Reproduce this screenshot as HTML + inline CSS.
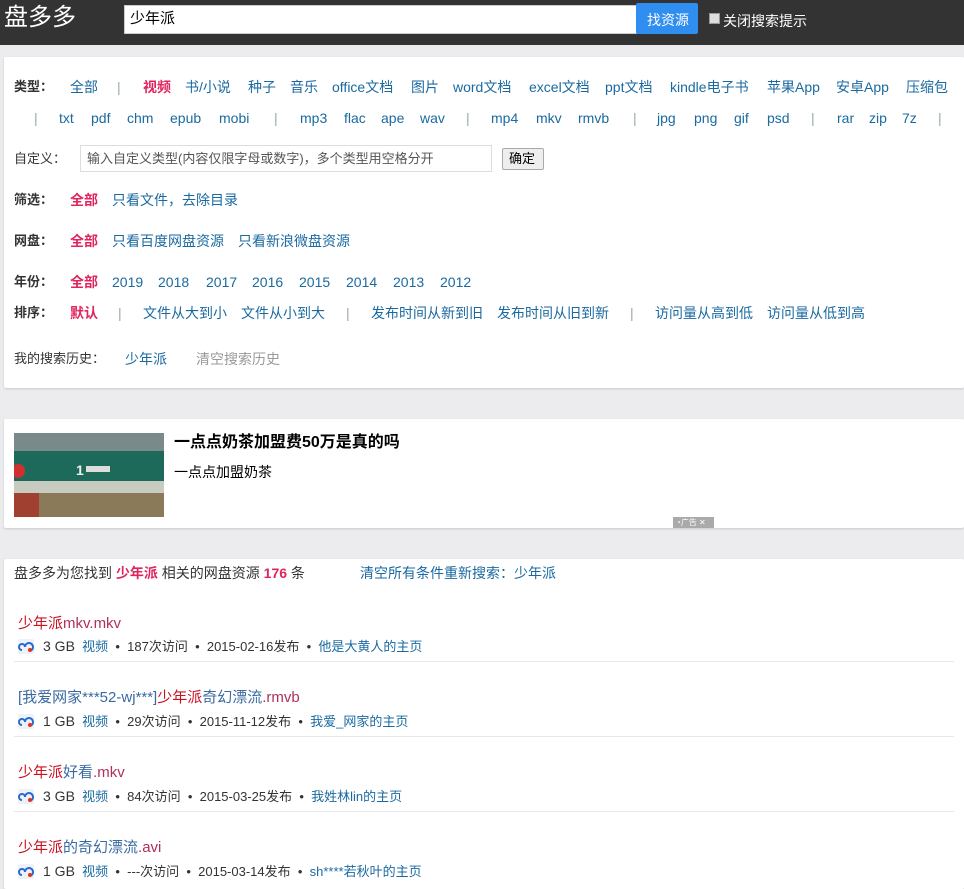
<!DOCTYPE html>
<html><head><meta charset="utf-8"><style>
*{margin:0;padding:0;box-sizing:border-box}
body{width:964px;height:884px;background:#ececee;font-family:"Liberation Sans","Noto Sans CJK SC",sans-serif;font-size:14px;color:#333;position:relative;overflow:hidden}
.a{position:absolute;white-space:nowrap;line-height:20px}
.l{color:#1a6aa0}
.r{color:#e0245e}
.b{font-weight:bold}
.s{color:#9aa;}
.p{position:absolute;left:4px;right:0;background:#fff;box-shadow:0 1px 2px rgba(0,0,0,.15);border-radius:2px}
.t{font-size:15px}
.k{color:#cc1020}
.m{font-size:13px;color:#333}
.hr{position:absolute;left:14px;width:940px;height:1px;background:#e8e8e8}
.ic{position:absolute;width:16px;height:15px;background:#eef2f6;border-radius:2px}
</style></head><body>
<div style="position:absolute;left:0;top:0;width:964px;height:45px;background:#333"></div>
<div class="a" style="left:4px;top:3px;font-size:24px;line-height:30px;color:#fff">盘多多</div>
<div style="position:absolute;left:124px;top:5px;width:513px;height:29px;background:#fff;border:1px solid #ccc"></div>
<div class="a" style="left:130px;top:9px;font-size:15px;color:#000">少年派</div>
<div style="position:absolute;left:636px;top:3px;width:62px;height:31px;background:#2f8ef0;border-radius:2px"></div>
<div class="a" style="left:647px;top:10px;color:#fff">找资源</div>
<div style="position:absolute;left:709px;top:13px;width:11px;height:11px;background:#ddd;border:1px solid #999"></div>
<div class="a" style="left:723px;top:11px;color:#fff">关闭搜索提示</div>

<div class="p" style="top:57px;height:331px"></div>
<div class="a b" style="left:14px;top:77px;font-size:13px">类型：</div>
<div class="a l" style="left:70px;top:77px">全部</div>
<div class="a s" style="left:117px;top:77px">|</div>
<div class="a r b" style="left:143px;top:77px">视频</div>
<div class="a l" style="left:185px;top:77px">书/小说</div>
<div class="a l" style="left:248px;top:77px">种子</div>
<div class="a l" style="left:290px;top:77px">音乐</div>
<div class="a l" style="left:332px;top:77px">office文档</div>
<div class="a l" style="left:411px;top:77px">图片</div>
<div class="a l" style="left:453px;top:77px">word文档</div>
<div class="a l" style="left:529px;top:77px">excel文档</div>
<div class="a l" style="left:605px;top:77px">ppt文档</div>
<div class="a l" style="left:670px;top:77px">kindle电子书</div>
<div class="a l" style="left:767px;top:77px">苹果App</div>
<div class="a l" style="left:836px;top:77px">安卓App</div>
<div class="a l" style="left:906px;top:77px">压缩包</div>

<div class="a s" style="left:34px;top:108px">|</div>
<div class="a l" style="left:59px;top:108px">txt</div>
<div class="a l" style="left:91px;top:108px">pdf</div>
<div class="a l" style="left:127px;top:108px">chm</div>
<div class="a l" style="left:170px;top:108px">epub</div>
<div class="a l" style="left:219px;top:108px">mobi</div>
<div class="a s" style="left:274px;top:108px">|</div>
<div class="a l" style="left:300px;top:108px">mp3</div>
<div class="a l" style="left:344px;top:108px">flac</div>
<div class="a l" style="left:381px;top:108px">ape</div>
<div class="a l" style="left:420px;top:108px">wav</div>
<div class="a s" style="left:466px;top:108px">|</div>
<div class="a l" style="left:491px;top:108px">mp4</div>
<div class="a l" style="left:536px;top:108px">mkv</div>
<div class="a l" style="left:578px;top:108px">rmvb</div>
<div class="a s" style="left:633px;top:108px">|</div>
<div class="a l" style="left:657px;top:108px">jpg</div>
<div class="a l" style="left:694px;top:108px">png</div>
<div class="a l" style="left:734px;top:108px">gif</div>
<div class="a l" style="left:767px;top:108px">psd</div>
<div class="a s" style="left:811px;top:108px">|</div>
<div class="a l" style="left:837px;top:108px">rar</div>
<div class="a l" style="left:869px;top:108px">zip</div>
<div class="a l" style="left:902px;top:108px">7z</div>
<div class="a s" style="left:938px;top:108px">|</div>

<div class="a" style="left:14px;top:149px;font-size:13px">自定义：</div>
<div style="position:absolute;left:80px;top:145px;width:412px;height:27px;border:1px solid #ddd;background:#fff"></div>
<div class="a" style="left:87px;top:149px;font-size:13px;color:#555">输入自定义类型(内容仅限字母或数字)，多个类型用空格分开</div>
<div style="position:absolute;left:502px;top:148px;width:42px;height:22px;border:1px solid #aaa;background:#eee;border-radius:2px"></div>
<div class="a" style="left:509px;top:149px;font-size:13px;color:#000">确定</div>

<div class="a b" style="left:14px;top:190px;font-size:13px">筛选：</div>
<div class="a r b" style="left:70px;top:190px">全部</div>
<div class="a l" style="left:112px;top:190px">只看文件，去除目录</div>
<div class="a b" style="left:14px;top:231px;font-size:13px">网盘：</div>
<div class="a r b" style="left:70px;top:231px">全部</div>
<div class="a l" style="left:112px;top:231px">只看百度网盘资源</div>
<div class="a l" style="left:238px;top:231px">只看新浪微盘资源</div>
<div class="a b" style="left:14px;top:272px;font-size:13px">年份：</div>
<div class="a r b" style="left:70px;top:272px">全部</div>
<div class="a l" style="left:112px;top:272px">2019</div>
<div class="a l" style="left:158px;top:272px">2018</div>
<div class="a l" style="left:206px;top:272px">2017</div>
<div class="a l" style="left:252px;top:272px">2016</div>
<div class="a l" style="left:299px;top:272px">2015</div>
<div class="a l" style="left:346px;top:272px">2014</div>
<div class="a l" style="left:393px;top:272px">2013</div>
<div class="a l" style="left:440px;top:272px">2012</div>
<div class="a b" style="left:14px;top:303px;font-size:13px">排序：</div>
<div class="a r b" style="left:70px;top:303px">默认</div>
<div class="a s" style="left:118px;top:303px">|</div>
<div class="a l" style="left:143px;top:303px">文件从大到小</div>
<div class="a l" style="left:241px;top:303px">文件从小到大</div>
<div class="a s" style="left:346px;top:303px">|</div>
<div class="a l" style="left:371px;top:303px">发布时间从新到旧</div>
<div class="a l" style="left:497px;top:303px">发布时间从旧到新</div>
<div class="a s" style="left:630px;top:303px">|</div>
<div class="a l" style="left:655px;top:303px">访问量从高到低</div>
<div class="a l" style="left:767px;top:303px">访问量从低到高</div>
<div class="a" style="left:14px;top:349px;font-size:13px">我的搜索历史：</div>
<div class="a l" style="left:125px;top:349px">少年派</div>
<div class="a" style="left:196px;top:349px;color:#999">清空搜索历史</div>

<div class="p" style="top:419px;height:109px"></div>
<svg style="position:absolute;left:14px;top:433px" width="150" height="84">
<rect width="150" height="84" fill="#3a4a40"/>
<rect y="0" width="150" height="18" fill="#7a8a8a"/>
<rect y="18" width="150" height="30" fill="#1e6a5a"/>
<rect y="48" width="150" height="12" fill="#c8ccc0"/>
<rect y="60" width="150" height="24" fill="#8a7a5a"/>
<rect x="0" y="60" width="25" height="24" fill="#a04030"/>
<circle cx="4" cy="38" r="7" fill="#d03030"/>
<text x="62" y="42" fill="#eee" font-size="14" font-weight="bold" font-family="Liberation Sans">1</text>
<rect x="72" y="33" width="24" height="6" fill="#ddd"/>
</svg>
<div class="a b" style="left:174px;top:433px;font-size:16px;color:#000">一点点奶茶加盟费50万是真的吗</div>
<div class="a" style="left:174px;top:462px;font-size:14px;color:#000">一点点加盟奶茶</div>
<div style="position:absolute;left:673px;top:517px;width:41px;height:11px;background:#aaa"></div>
<div class="a" style="left:676px;top:517px;font-size:8px;line-height:11px;color:#fff">◔广告 ✕</div>

<div class="p" style="top:559px;height:330px"></div>
<div class="a" style="left:14px;top:563px;font-size:14px">盘多多为您找到 <span class="r b">少年派</span> 相关的网盘资源 <span class="r b">176</span> 条</div>
<div class="a l" style="left:360px;top:563px;font-size:14px">清空所有条件重新搜索：少年派</div>

<div class="a t" style="left:18px;top:614px"><span class="k">少年派</span><span style="color:#b0305a">mkv.mkv</span></div>
<svg class="ic" style="left:18px;top:639px" viewBox="0 0 16 15"><path d="M4 11a3 3 0 1 1 3-3M7 8a4 4 0 1 1 6 3.5" fill="none" stroke="#2a6ad0" stroke-width="2"/><circle cx="12" cy="11" r="2" fill="#e03030"/></svg>
<div class="a m" style="left:43px;top:636px"><span style="font-size:14px">3 GB</span>&nbsp; <span class="l">视频</span> &nbsp;•&nbsp; 187次访问 &nbsp;•&nbsp; 2015-02-16发布 &nbsp;•&nbsp; <span class="l">他是大黄人的主页</span></div>
<div class="hr" style="top:661px"></div>

<div class="a t" style="left:18px;top:688px"><span style="color:#3a6aa0">[我爱网家***52-wj***]</span><span class="k">少年派</span><span style="color:#3a6aa0">奇幻漂流</span><span style="color:#b0305a">.rmvb</span></div>
<svg class="ic" style="left:18px;top:714px" viewBox="0 0 16 15"><path d="M4 11a3 3 0 1 1 3-3M7 8a4 4 0 1 1 6 3.5" fill="none" stroke="#2a6ad0" stroke-width="2"/><circle cx="12" cy="11" r="2" fill="#e03030"/></svg>
<div class="a m" style="left:43px;top:711px"><span style="font-size:14px">1 GB</span>&nbsp; <span class="l">视频</span> &nbsp;•&nbsp; 29次访问 &nbsp;•&nbsp; 2015-11-12发布 &nbsp;•&nbsp; <span class="l">我爱_网家的主页</span></div>
<div class="hr" style="top:736px"></div>

<div class="a t" style="left:18px;top:763px"><span class="k">少年派</span><span style="color:#3a6aa0">好看</span><span style="color:#b0305a">.mkv</span></div>
<svg class="ic" style="left:18px;top:789px" viewBox="0 0 16 15"><path d="M4 11a3 3 0 1 1 3-3M7 8a4 4 0 1 1 6 3.5" fill="none" stroke="#2a6ad0" stroke-width="2"/><circle cx="12" cy="11" r="2" fill="#e03030"/></svg>
<div class="a m" style="left:43px;top:786px"><span style="font-size:14px">3 GB</span>&nbsp; <span class="l">视频</span> &nbsp;•&nbsp; 84次访问 &nbsp;•&nbsp; 2015-03-25发布 &nbsp;•&nbsp; <span class="l">我姓林lin的主页</span></div>
<div class="hr" style="top:811px"></div>

<div class="a t" style="left:18px;top:838px"><span class="k">少年派</span><span style="color:#3a6aa0">的奇幻漂流</span><span style="color:#b0305a">.avi</span></div>
<svg class="ic" style="left:18px;top:864px" viewBox="0 0 16 15"><path d="M4 11a3 3 0 1 1 3-3M7 8a4 4 0 1 1 6 3.5" fill="none" stroke="#2a6ad0" stroke-width="2"/><circle cx="12" cy="11" r="2" fill="#e03030"/></svg>
<div class="a m" style="left:43px;top:861px"><span style="font-size:14px">1 GB</span>&nbsp; <span class="l">视频</span> &nbsp;•&nbsp; ---次访问 &nbsp;•&nbsp; 2015-03-14发布 &nbsp;•&nbsp; <span class="l">sh****若秋叶的主页</span></div>
</body></html>
